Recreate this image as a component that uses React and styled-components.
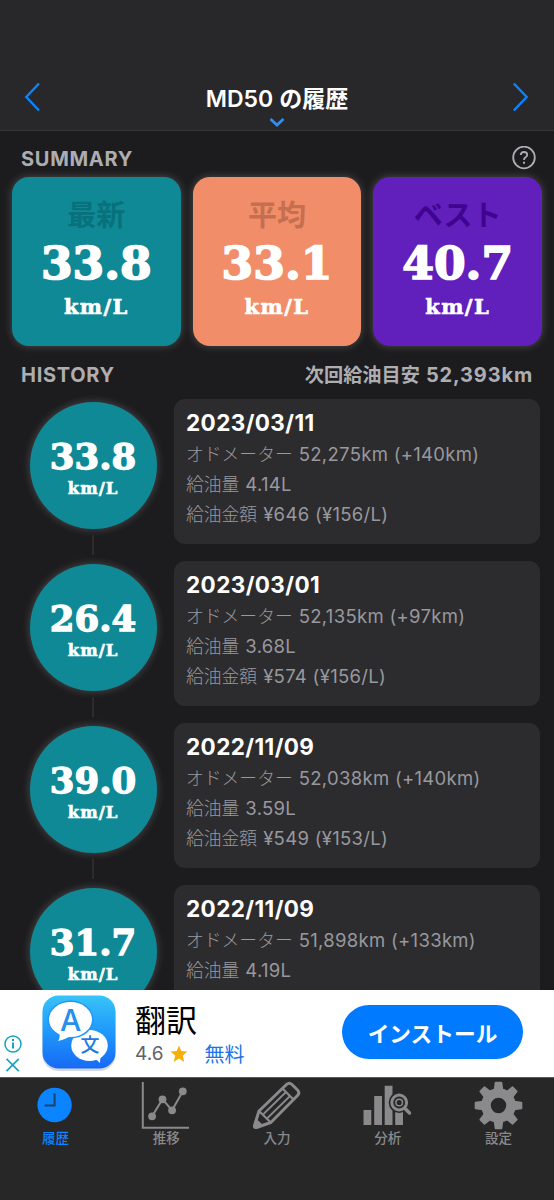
import styled, { createGlobalStyle } from "styled-components";

const GlobalStyle = createGlobalStyle`
  * {
    box-sizing: border-box;
  }
  body {
    margin: 0;
    background-color: #1c1c1e;
    font-family: Inter, "Noto Sans CJK JP", sans-serif;
  }
  p, h1, h2, h3 {
    margin: 0;
  }
  svg {
    display: block;
  }
  button {
    border: none;
    background: none;
    padding: 0;
    font-family: inherit;
  }
`;

const Screen = styled.div`
  display: flex;
  flex-direction: column;
  width: 554px;
  height: 1200px;
  overflow: hidden;
  background-color: #1c1c1e;
`;

const Header = styled.header`
  display: flex;
  align-items: flex-end;
  justify-content: space-between;
  flex: none;
  height: 131px;
  padding: 0 24px 17px;
  background-color: #28282a;
  border-bottom: 1px solid #363638;
`;

const TitleBox = styled.div`
  display: flex;
  flex-direction: column;
  align-items: center;
  gap: 2px;
  margin-bottom: -15px;
`;

const Title = styled.h1`
  display: flex;
  gap: 6px;
  color: white;
  font-size: 23px;
  font-weight: 600;
  line-height: 34px;
`;

const Content = styled.main`
  flex: 1;
  min-height: 0;
  overflow: hidden;
`;

const SectionHead = styled.div`
  display: flex;
  align-items: center;
  justify-content: space-between;
  height: ${(p) => p.$height};
  padding: ${(p) => p.$padding};
`;

const SectionTitle = styled.h2`
  color: #aeaeb2;
  font-size: 20px;
  font-weight: 700;
  line-height: 28px;
  letter-spacing: 0.7px;
`;

const NextRefuel = styled(SectionTitle)`
  display: flex;
  gap: 6px;
  letter-spacing: 0.85px;
`;

const NextLabel = styled.span`
  font-size: 19.2px;
  letter-spacing: 0;
`;

const Summary = styled.div`
  display: grid;
  grid-template-columns: repeat(3, 1fr);
  gap: 12px;
  padding: 0 12px;
`;

const SummaryCard = styled.div`
  display: flex;
  flex-direction: column;
  align-items: center;
  height: 169px;
  padding-top: 19px;
  border-radius: 17px;
  color: ${(p) => p.$labelColor};
  background-color: ${(p) => p.$color};
  box-shadow: 0 0 8px #ffffff38;
`;

const CardLabel = styled.p`
  font-size: 29px;
  font-weight: 700;
  line-height: 40px;
`;

const Value = styled.p`
  color: white;
  font-family: "DejaVu Serif", serif;
  font-weight: 700;
  font-size: ${(p) => (p.$small ? "35.5px" : "45.5px")};
  line-height: ${(p) => (p.$small ? "42px" : "54px")};
  -webkit-text-stroke: ${(p) => (p.$small ? "1.3px" : "1.7px")} white;
`;

const Unit = styled.p`
  color: white;
  font-family: "DejaVu Serif", serif;
  font-weight: 700;
  font-size: ${(p) => (p.$small ? "16.5px" : "21px")};
  line-height: ${(p) => (p.$small ? "21px" : "34px")};
  letter-spacing: ${(p) => (p.$small ? "1px" : "1.4px")};
  -webkit-text-stroke: 0.6px white;
`;

const HistoryRow = styled.div`
  display: flex;
  height: 162px;
`;

const Timeline = styled.div`
  display: flex;
  flex-direction: column;
  align-items: center;
  flex: none;
  width: 174px;
  padding: 3px 0 0 12px;
`;

const Circle = styled.div`
  display: flex;
  flex-direction: column;
  align-items: center;
  flex: none;
  width: 127px;
  height: 127px;
  padding-top: 34px;
  border-radius: 50%;
  background-color: #0f8996;
  box-shadow: 0 0 8px #ffffff38;
`;

const Connector = styled.div`
  width: 2px;
  height: 20px;
  margin-top: 6px;
  background-color: #2c2c2e;
`;

const RecordCard = styled.div`
  width: 366px;
  height: 145px;
  padding: 9px 12px;
  border-radius: 11px;
  background-color: #2c2c2e;
`;

const RecordDate = styled.h3`
  margin-bottom: 2px;
  color: white;
  font-size: 22.5px;
  font-weight: 700;
  line-height: 30px;
  letter-spacing: 0.4px;
`;

const RecordLine = styled.p`
  display: flex;
  gap: 6px;
  color: #98989e;
  font-size: 18.5px;
  font-weight: 400;
  line-height: 29.6px;
  letter-spacing: 0.3px;
  white-space: nowrap;
`;

const RecordLabel = styled.span`
  font-size: 17.8px;
  font-weight: 300;
  letter-spacing: 0;
`;

const Banner = styled.aside`
  display: flex;
  flex: none;
  height: 87px;
  background-color: white;
`;

const AdMarks = styled.div`
  display: flex;
  flex-direction: column;
  justify-content: flex-end;
  gap: 5px;
  width: 38px;
  padding: 0 0 5px 4px;
`;

const AdText = styled.div`
  flex: 1;
  padding: 10px 0 0 15px;
`;

const AdTitle = styled.p`
  color: black;
  font-size: 31px;
  line-height: 42px;
`;

const AdInfo = styled.div`
  display: flex;
  align-items: center;
  gap: 7px;
  height: 23px;
  color: #5f6368;
  font-size: 19px;
`;

const Free = styled.span`
  margin-left: 9px;
  color: #1a73e8;
  font-size: 20px;
`;

const InstallButton = styled.button`
  width: 181px;
  height: 54px;
  margin: 15px 31px 0 0;
  border-radius: 27px;
  color: white;
  background-color: #007aff;
  font-size: 21.7px;
  font-weight: 700;
`;

const TabBar = styled.nav`
  display: grid;
  grid-template-columns: repeat(5, 1fr);
  flex: none;
  height: 123px;
  background-color: #272728;
  border-top: 1px solid #59595b;
`;

const Tab = styled.button`
  display: flex;
  flex-direction: column;
  align-items: center;
  padding-top: 2px;
  color: ${(p) => (p.$active ? "#0a84ff" : "#8a8a8c")};
  font-size: 13.5px;
  font-weight: 500;
  line-height: 17px;
`;

const TabIcon = styled.svg`
  flex: none;
  width: 52px;
  height: 50px;
`;

const summary = [
  { label: "最新", value: "33.8", color: "#0f8996", labelColor: "#08717c" },
  { label: "平均", value: "33.1", color: "#f18d69", labelColor: "#c46f50" },
  { label: "ベスト", value: "40.7", color: "#611fbc", labelColor: "#3f0590" },
];

const records = [
  { value: "33.8", date: "2023/03/11", odo: "52,275km (+140km)", fuel: "4.14L", price: "¥646 (¥156/L)" },
  { value: "26.4", date: "2023/03/01", odo: "52,135km (+97km)", fuel: "3.68L", price: "¥574 (¥156/L)" },
  { value: "39.0", date: "2022/11/09", odo: "52,038km (+140km)", fuel: "3.59L", price: "¥549 (¥153/L)" },
  { value: "31.7", date: "2022/11/09", odo: "51,898km (+133km)", fuel: "4.19L" },
];

// every icon is drawn on the same 52x50 grid
const tabs = [
  {
    label: "履歴",
    icon: (
      <>
        <circle cx="25.6" cy="25" r="17.2" fill="currentColor" />
        <path d="M25.6 13.5V25.5H15.6" fill="none" stroke="#1d4268" strokeWidth="2" />
      </>
    ),
  },
  {
    label: "推移",
    icon: (
      <g stroke="currentColor" fill="none" strokeWidth="2">
        <path d="M2.8 2V47.8H49" />
        <path d="M12.1 36.3L22.5 19.3L32.1 30.3L42.8 11.3" />
        <g fill="currentColor" stroke="none">
          <circle cx="12.1" cy="36.3" r="3.9" />
          <circle cx="22.5" cy="19.3" r="3.9" />
          <circle cx="32.1" cy="30.3" r="3.9" />
          <circle cx="42.8" cy="11.3" r="3.9" />
        </g>
      </g>
    ),
  },
  {
    label: "入力",
    icon: (
      <g stroke="currentColor" fill="none" strokeWidth="3" strokeLinejoin="round">
        <path d="M3.5 45.5L8 31L35.5 4.5Q38.2 2 41 4.5L46.5 10Q49.2 12.8 46.5 15.5L19.8 42.500L5.500 47.500Q3 48 3.500 45.500Z" />
        <path d="M8 31L19.8 42.5M31.5 8.500L42.500 19.500" strokeWidth="2.200" />
        <path d="M12.500 34L34.500 12.500M16.500 38L38.500 16.500" strokeWidth="1.800" />
        <path d="M4 46.500L5.500 41L10 45Z" fill="currentColor" />
      </g>
    ),
  },
  {
    label: "分析",
    icon: (
      <>
        <path
          d="M1.500 30h7.800v15H1.500zM12.200 16h7.800v29h-7.800zM22.700 5.700h7.800v39.300h-7.800zM33.200 20h7.800v25h-7.800z"
          fill="currentColor"
        />
        <circle cx="37.200" cy="22.500" r="10.500" fill="#272728" />
        <circle cx="37.200" cy="22.500" r="7.400" fill="none" stroke="currentColor" strokeWidth="3" />
        <circle cx="37.200" cy="22.500" r="3.300" fill="none" stroke="currentColor" strokeWidth="1.500" />
        <path d="M43 28.500L47.500 33" stroke="currentColor" strokeWidth="3.500" strokeLinecap="round" />
      </>
    ),
  },
  {
    label: "設定",
    icon: (
      <>
        <g fill="currentColor">
          {[0, 45, 90, 135, 180, 225, 270, 315].map((deg) => (
            <path key={deg} d="M20.300 13L21.700 2.600Q21.800 1.700 22.700 1.700H28.300Q29.200 1.700 29.300 2.600L30.700 13z" transform={`rotate(${deg} 25.500 25.500)`} />
          ))}
        </g>
        <circle cx="25.500" cy="25.500" r="12.500" fill="none" stroke="currentColor" strokeWidth="9.500" />
      </>
    ),
  },
];

function TranslateIcon() {
  return (
    <svg width="82" height="87" viewBox="0 0 82 87">
      <defs>
        <linearGradient id="appBlue" x1="0" y1="0" x2="0" y2="1">
          <stop offset="0" stopColor="#38c4f8" />
          <stop offset="0.5" stopColor="#1e98fb" />
          <stop offset="1" stopColor="#1769f5" />
        </linearGradient>
      </defs>
      <rect x="4.500" y="7" width="73" height="74" rx="16" fill="#d5d8df" />
      <rect x="4.500" y="5.500" width="73" height="73" rx="16" fill="url(#appBlue)" />
      <ellipse cx="51.500" cy="55.500" rx="18.300" ry="15.500" fill="white" />
      <path d="M55 68Q59 69.500 62 73Q61.500 69 63.500 66z" fill="white" />
      <ellipse cx="32.500" cy="29.500" rx="23" ry="19" fill="#2396fb" />
      <ellipse cx="32.500" cy="29.500" rx="21.500" ry="17.500" fill="white" />
      <path d="M21 42Q23 46 20 51Q28 49 33 45.500z" fill="white" />
      <text x="32.700" y="40.500" textAnchor="middle" fontFamily="Inter, sans-serif" fontSize="30" fontWeight="500" fill="#2690ec">
        A
      </text>
      <text x="52" y="62" textAnchor="middle" fontFamily="Noto Sans CJK JP, sans-serif" fontSize="19" fontWeight="500" fill="#2479dc">
        文
      </text>
    </svg>
  );
}

function RecordField({ label, children }) {
  return (
    <RecordLine>
      <RecordLabel>{label}</RecordLabel>
      {children}
    </RecordLine>
  );
}

function HistoryItem({ record }) {
  return (
    <HistoryRow>
      <Timeline>
        <Circle>
          <Value $small>{record.value}</Value>
          <Unit $small>km/L</Unit>
        </Circle>
        <Connector />
      </Timeline>
      <RecordCard>
        <RecordDate>{record.date}</RecordDate>
        <RecordField label="オドメーター">{record.odo}</RecordField>
        <RecordField label="給油量">{record.fuel}</RecordField>
        {record.price && <RecordField label="給油金額">{record.price}</RecordField>}
      </RecordCard>
    </HistoryRow>
  );
}

function App() {
  return (
    <Screen>
      <GlobalStyle />
      <Header>
        <svg width="18" height="32" viewBox="0 0 18 32" fill="none" stroke="#0a84ff" strokeWidth="2.4">
          <path d="M15 2.500L2.300 16L15 29.500" />
        </svg>
        <TitleBox>
          <Title>
            <span>MD50</span>
            <span>の履歴</span>
          </Title>
          <svg width="16" height="10" viewBox="0 0 16 10" fill="none" stroke="#2f8df5" strokeWidth="2.8">
            <path d="M1.500 1L8 7L14.500 1" />
          </svg>
        </TitleBox>
        <svg width="18" height="32" viewBox="0 0 18 32" fill="none" stroke="#0a84ff" strokeWidth="2.4">
          <path d="M1.800 2.500L14.700 16L1.800 29.500" />
        </svg>
      </Header>

      <Content>
        <SectionHead $height="46.4px" $padding="9px 17px 0 21px">
          <SectionTitle>SUMMARY</SectionTitle>
          <svg width="26" height="26" viewBox="0 0 26 26" fill="none" stroke="#aeaeb2" strokeWidth="1.800">
            <circle cx="13" cy="11.500" r="10.800" />
            <path d="M9.700 9Q10 6 13 6Q16.200 6 16.200 8.800Q16.200 10.500 14.300 11.500Q13 12.300 13 14" />
            <path d="M13 15.800V17.700" strokeWidth="2" />
          </svg>
        </SectionHead>

        <Summary>
          {summary.map((item) => (
            <SummaryCard key={item.label} $color={item.color} $labelColor={item.labelColor}>
              <CardLabel>{item.label}</CardLabel>
              <Value>{item.value}</Value>
              <Unit>km/L</Unit>
            </SummaryCard>
          ))}
        </Summary>

        <SectionHead $height="53px" $padding="4px 21px 0">
          <SectionTitle>HISTORY</SectionTitle>
          <NextRefuel>
            <NextLabel>次回給油目安</NextLabel>
            52,393km
          </NextRefuel>
        </SectionHead>

        {records.map((record) => (
          <HistoryItem key={record.odo} record={record} />
        ))}
      </Content>

      <Banner>
        <AdMarks>
          <svg width="18" height="18" viewBox="0 0 18 18" fill="none" stroke="#16a5bd" strokeWidth="1.500">
            <circle cx="9" cy="9" r="8" />
            <path d="M9 7.500V13.500M9 4V6" strokeWidth="2" />
          </svg>
          <svg width="18" height="14" viewBox="0 0 18 14" fill="none" stroke="#16a5bd" strokeWidth="1.700">
            <path d="M2.500 .8L14.800 13.200M14.800 .8L2.500 13.200" />
          </svg>
        </AdMarks>
        <TranslateIcon />
        <AdText>
          <AdTitle>翻訳</AdTitle>
          <AdInfo>
            4.6
            <svg width="18" height="18" viewBox="0 0 18 18" fill="#f5b10a">
              <path d="M9 .5L11.300 6L17.500 6.500L12.800 10.500L14.300 17L9 13.500L3.700 17L5.200 10.500L.5 6.500L6.700 6z" />
            </svg>
            <Free>無料</Free>
          </AdInfo>
        </AdText>
        <InstallButton>インストール</InstallButton>
      </Banner>

      <TabBar>
        {tabs.map((tab, i) => (
          <Tab key={tab.label} $active={i === 0}>
            <TabIcon viewBox="0 0 52 50">{tab.icon}</TabIcon>
            {tab.label}
          </Tab>
        ))}
      </TabBar>
    </Screen>
  );
}

export default App;
